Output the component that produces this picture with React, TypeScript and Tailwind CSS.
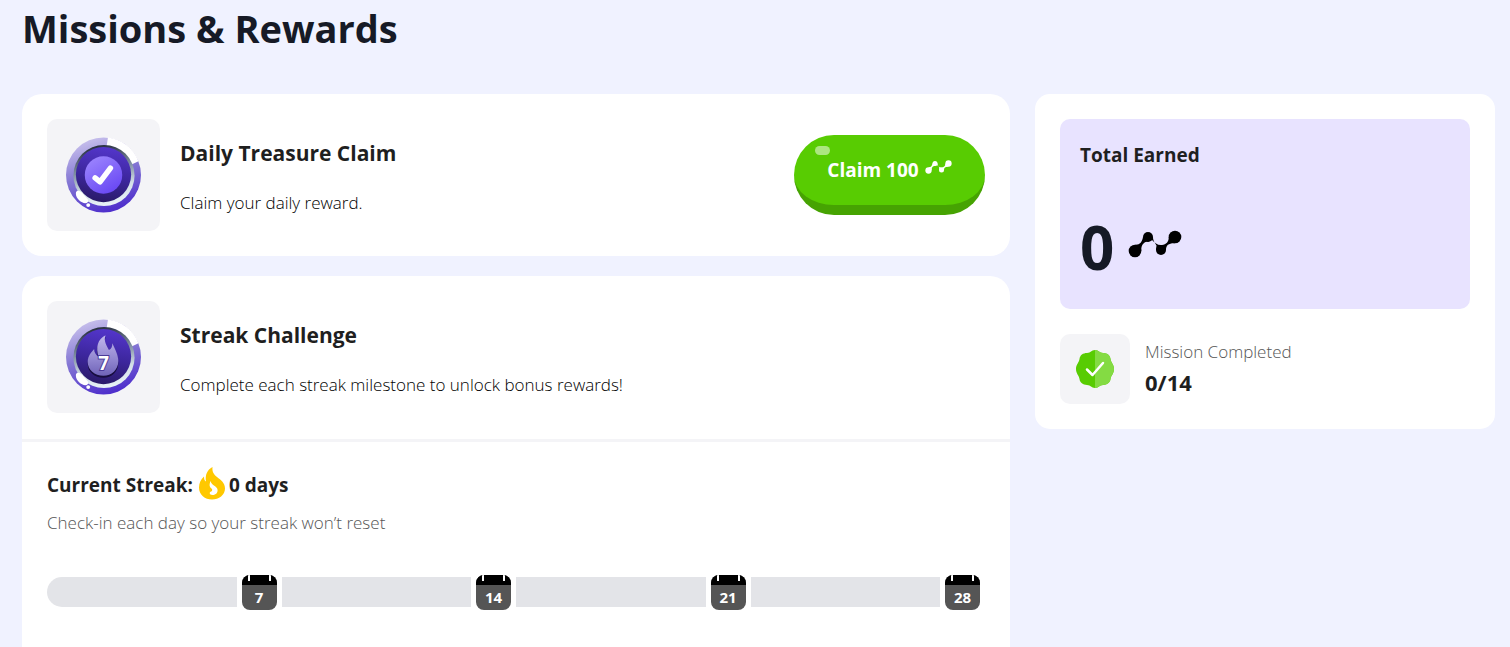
import type { ReactNode } from 'react';

const milestones = [7, 14, 21, 28];

function NodesIcon({ className }: { className: string }) {
  return (
    <svg viewBox="0 0 54 28" className={className} fill="currentColor" aria-hidden="true">
      <circle cx="7" cy="21" r="6.3" />
      <circle cx="20" cy="7" r="5" />
      <circle cx="33" cy="20" r="5" />
      <circle cx="47" cy="7" r="6.3" />
      <path d="M7 14.700C12 15 14 12 15 7H25C25 11 27 12.500 28.500 15.500L28 20H38C38 15 41 13 47 13.300L40.700 7C41 12 38 14.500 34 15C29.500 15.500 27 13 24 10L20 11.500C15.500 12 13 15 13.300 21Z" />
    </svg>
  );
}

function FlameIcon() {
  return (
    <svg viewBox="0 0 26 33" className="w-[26px] h-[33px] mb-1 text-[#ffc800]" fill="currentColor" aria-hidden="true">
      <path
        fillRule="evenodd"
        d="M13.500 0C13 5 14.500 7 18 10C22 13 26 16 26 21.500C26 28 20 32.500 13 32.500C6 32.500 0 28 0 20.500C0 16 2 12 5 9.500C5 12 5.500 14 7 14.500C6 8 8 3 13.500 0ZM11.500 14C10 18 10.500 20 12.500 21.500C14 23 13 24.500 11 25C10 27 11.500 28 13.500 28C17 28 19 25.500 18.500 22.500C18 19 13 19 11.500 14Z"
      />
    </svg>
  );
}

function Medal({ id, children }: { id: string; children: ReactNode }) {
  return (
    <svg viewBox="0 0 76 76" className="w-[75px] h-[76px]" aria-hidden="true">
      <defs>
        <linearGradient id={`${id}-ring`} x1="0.2" y1="0" x2="0.5" y2="1">
          <stop offset="0" stopColor="#cdc6ee" />
          <stop offset="0.5" stopColor="#8578d4" />
          <stop offset="1" stopColor="#4f30cc" />
        </linearGradient>
        <linearGradient id={`${id}-rim`} x1="0.4" y1="0" x2="0.6" y2="1">
          <stop offset="0" stopColor="#252c3c" />
          <stop offset="0.4" stopColor="#8292a5" />
          <stop offset="0.7" stopColor="#d3dfe8" />
          <stop offset="1" stopColor="#eaf3f8" />
        </linearGradient>
        <linearGradient id={`${id}-core`} x1="0.65" y1="0" x2="0.5" y2="1">
          <stop offset="0" stopColor="#5436cc" />
          <stop offset="0.55" stopColor="#3c269c" />
          <stop offset="1" stopColor="#2a1a69" />
        </linearGradient>
        <linearGradient id={`${id}-front`} x1="0" y1="0" x2="0.6" y2="1">
          <stop offset="0" stopColor="#a18bff" />
          <stop offset="1" stopColor="#6b4af4" />
        </linearGradient>
        <linearGradient id={`${id}-flame`} x1="0" y1="0" x2="0" y2="1">
          <stop offset="0" stopColor="#c2b9ec" />
          <stop offset="0.6" stopColor="#9186d0" />
          <stop offset="1" stopColor="#6f63b8" />
        </linearGradient>
      </defs>
      <circle cx="38" cy="38" r="38" fill={`url(#${id}-ring)`} />
      <path d="M42.500 0A38 38 0 0 1 73.500 24L61 30A26 26 0 0 0 41 10Z" fill="#fff" />
      <circle cx="38.500" cy="38.500" r="31" fill={`url(#${id}-rim)`} />
      <circle cx="38" cy="37.500" r="28" fill={`url(#${id}-core)`} />
      <path d="M10 57C10 52 15 54 18 58C20 61 24 63 22 65.500C19 69 10 63 10 57Z" fill="#fff" />
      <circle cx="22.500" cy="68.500" r="2" fill="#fff" />
      {children}
    </svg>
  );
}

function CheckMedal() {
  return (
    <Medal id="check">
      <circle cx="38" cy="38" r="19" fill="url(#check-front)" />
      <path d="M29.500 41L34.500 45L45 31" fill="none" stroke="#fff" strokeWidth="5.500" strokeLinecap="round" strokeLinejoin="round" />
    </Medal>
  );
}

function StreakMedal() {
  const flame =
    'M40 16C38 22 41 26 43.500 31C46 30 47 27 47 24C50 31 53 36 53 42C53 51 46 57 38 57C29 57 22 51 22 43C22 37 26 33 28.500 30C28.500 33 30 36 33 38C30 28 32 20 40 16Z';
  return (
    <Medal id="streak">
      <path d={flame} fill="#170d3f" transform="translate(0 2)" />
      <path d={flame} fill="url(#streak-flame)" />
      <text x="38" y="51" textAnchor="middle" fontSize="19" fontWeight="700" fill="#fff" stroke="#4b3b98" strokeWidth="2" paintOrder="stroke">
        7
      </text>
    </Medal>
  );
}

function VerifiedIcon() {
  return (
    <svg viewBox="0 0 38 38" className="w-[38px] h-[38px]" aria-hidden="true">
      <path
        d="M19 0C23 0 23 3 27 3C31 3 34 5 34.500 9C35 13 38 14 38 19C38 24 35 25 34.500 29C34 33 31 34.500 27 35C23 35 23 38 19 38C15 38 15 35 11 35C7 34.500 4 33 3.500 29C3 25 0 24 0 19C0 14 3 13 3.500 9C4 5 7 3 11 3C15 3 15 0 19 0Z"
        fill="#58cc02"
      />
      <path d="M19 0C23 0 23 3 27 3C31 3 34 5 34.500 9C35 13 38 14 38 19C38 24 35 25 34.500 29C34 33 31 34.500 27 35C23 35 23 38 19 38Z" fill="#84db43" />
      <path d="M11 19.500L16.500 25L27 13" fill="none" stroke="#fff" strokeWidth="2.500" strokeLinecap="round" strokeLinejoin="round" />
    </svg>
  );
}

function CalendarBadge({ day }: { day: number }) {
  return (
    <div className="shrink-0 w-[35px] h-[35px] mx-[5px] rounded-lg overflow-hidden bg-[#555555] text-white">
      <div className="flex justify-between h-[10px] px-[6px] bg-black">
        <span className="w-[2px] h-[6px] bg-white" />
        <span className="w-[2px] h-[6px] bg-white" />
      </div>
      <p className="text-center text-[15px] leading-[25px] font-bold">{day}</p>
    </div>
  );
}

interface MissionHeaderProps {
  icon: ReactNode;
  title: string;
  description: string;
  action?: ReactNode;
}

function MissionHeader({ icon, title, description, action }: MissionHeaderProps) {
  return (
    <div className="flex items-center gap-5 p-[25px]">
      <div className="flex shrink-0 items-center justify-center w-[113px] h-[112px] rounded-[10px] bg-[#f4f4f7]">
        {icon}
      </div>
      <div className="flex-1 pt-[6px]">
        <h2 className="text-[21px] leading-[30px] font-bold">{title}</h2>
        <p className="mt-5 text-[17px] leading-[30px] font-[350] text-black">{description}</p>
      </div>
      {action}
    </div>
  );
}

export default function App() {
  return (
    <div className="flex flex-col min-h-screen pl-[22px] pr-[15px] bg-[#f0f2ff] text-[#1f1f1f] font-['Segoe_UI','Open_Sans',sans-serif]">
      <h1 className="h-[94px] text-[38px] leading-[56px] font-bold text-[#161a26]">
        Missions &amp; Rewards
      </h1>
      <div className="flex flex-1 items-stretch gap-[25px]">
        <main className="flex flex-1 flex-col gap-5">
          <section className="rounded-[20px] bg-white">
            <MissionHeader
              icon={<CheckMedal />}
              title="Daily Treasure Claim"
              description="Claim your daily reward."
              action={
                <button className="relative flex items-center justify-center gap-[6px] w-[191px] h-20 rounded-[40px] border-b-[10px] border-[#46a302] bg-[#58cc02] text-[19px] font-bold text-white">
                  <span className="absolute left-[21px] top-[11px] w-[15px] h-[9px] rounded-full bg-white/50" />
                  Claim 100
                  <NodesIcon className="w-[27px] h-[14px] mb-[6px]" />
                </button>
              }
            />
          </section>
          <section className="flex-1 rounded-t-[20px] bg-white">
            <MissionHeader
              icon={<StreakMedal />}
              title="Streak Challenge"
              description="Complete each streak milestone to unlock bonus rewards!"
            />
            <div className="mt-px border-t-[3px] border-[#f4f4f7] p-[25px]">
              <div className="flex items-center h-9 text-[19px] leading-[36px] font-bold">
                <span className="mr-[6px]">Current Streak:</span>
                <FlameIcon />
                <span className="ml-1">0 days</span>
              </div>
              <p className="mt-[5px] text-[17px] leading-[30px] font-[350] text-[#555555]">
                Check-in each day so your streak won’t reset
              </p>
              <div className="flex mt-[37px]">
                {milestones.map((day, index) => (
                  <div key={day} className="flex flex-1 items-start">
                    <div className={`flex-1 h-[30px] mt-[2px] bg-[#e3e4e8] ${index === 0 ? 'rounded-l-full' : ''}`} />
                    <CalendarBadge day={day} />
                  </div>
                ))}
              </div>
            </div>
          </section>
        </main>
        <aside className="self-start w-[460px] p-[25px] rounded-[15px] bg-white">
          <div className="h-[190px] px-5 pt-[21px] rounded-[10px] bg-[#e8e3ff]">
            <h2 className="text-[19px] leading-[30px] font-bold">Total Earned</h2>
            <div className="flex items-center gap-[14px] mt-[37px] text-[60px] leading-[80px] font-bold text-[#161a26]">
              0
              <NodesIcon className="w-[54px] h-[28px] mb-[6px] text-black" />
            </div>
          </div>
          <div className="flex items-center gap-[15px] mt-[25px]">
            <div className="flex items-center justify-center w-[70px] h-[70px] rounded-[10px] bg-[#f4f4f7]">
              <VerifiedIcon />
            </div>
            <div className="pb-[5px]">
              <p className="text-[17px] leading-[30px] font-[350] text-[#555555]">Mission Completed</p>
              <p className="text-[22px] leading-[30px] font-bold">0/14</p>
            </div>
          </div>
        </aside>
      </div>
    </div>
  );
}
